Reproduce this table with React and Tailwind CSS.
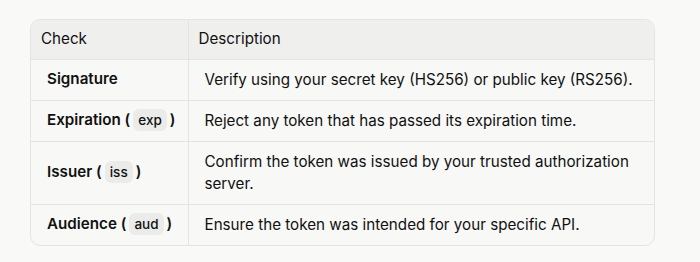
import React from "react";

const rows = [
  {
    label: "Signature",
    desc: "Verify using your secret key (HS256) or public key (RS256).",
  },
  {
    label: "Expiration",
    code: "exp",
    desc: "Reject any token that has passed its expiration time.",
  },
  {
    label: "Issuer",
    code: "iss",
    desc: "Confirm the token was issued by your trusted authorization server.",
  },
  {
    label: "Audience",
    code: "aud",
    desc: "Ensure the token was intended for your specific API.",
  },
];

const Code = ({ children }) => (
  <code className="mx-[3px] inline-block rounded-[6px] bg-[#ebebea] px-[5px] py-[2px] font-['Inter',sans-serif] text-[13.5px] font-medium leading-[18px] text-[#111]">
    {children}
  </code>
);

export default function App() {
  return (
    <div className="h-[262px] w-[700px] bg-[#f9f9f8] px-[30px] pt-[19px] font-['Inter',sans-serif] text-[15.2px] text-[#111]">
      <div className="w-[625px] overflow-hidden rounded-[10px] border border-[#e4e4e2] bg-[#f8f8f7]">
        <table className="w-full border-collapse">
          <thead>
            <tr className="h-[39px] bg-[#efefee] text-left">
              <th className="w-[157px] border-r border-[#e4e4e2] pl-[10px] font-normal">
                Check
              </th>
              <th className="pl-[10px] font-normal">Description</th>
            </tr>
          </thead>
          <tbody>
            {rows.map((r) => (
              <tr key={r.label} className="border-t border-[#e4e4e2]">
                <td className="h-[41px] border-r border-[#e4e4e2] pl-[16px] font-semibold">
                  {r.label}
                  {r.code && (
                    <>
                      {" ("}
                      <Code>{r.code}</Code>
                      {")"}
                    </>
                  )}
                </td>
                <td className="py-[9px] pl-[16px] pr-[19px] leading-[22px]">
                  {r.desc}
                </td>
              </tr>
            ))}
          </tbody>
        </table>
      </div>
    </div>
  );
}
